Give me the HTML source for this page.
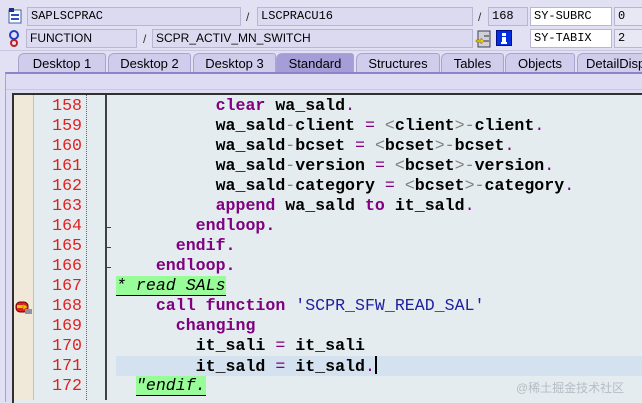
<!DOCTYPE html>
<html><head><meta charset="utf-8"><style>
*{margin:0;padding:0;box-sizing:border-box}
body{width:642px;height:400px;overflow:hidden;background:#e2e1f3;position:relative;font-family:"Liberation Sans",sans-serif}
.f{position:absolute;height:19px;background:#dcdaf0;border:1px solid #b8b6d0;font-size:12px;line-height:17px;padding-left:3px;color:#000}
.m{font-family:"Liberation Mono",monospace;font-size:12px}
.w{background:#fff}
.sl{position:absolute;font-size:12px;color:#333}
.tab{position:absolute;top:53px;height:20px;background:#d0ccec;border:1px solid #a8a4d0;border-bottom:none;font-size:13px;line-height:19px;text-align:center;border-radius:6px 3px 0 0}
.tab.a{background:#a49ed8}
#ed{position:absolute;left:12px;top:93px;width:640px;height:310px;background:#e4ecf0;border-top:2px solid #303030;border-left:2px solid #303030}
.gut{position:absolute;left:14px;top:95px;width:20px;height:305px;background:#f0e8d8;border-right:1px solid #c8c0b0}
.num{position:absolute;left:34px;top:95px;width:72px;height:305px;background:#e4ecf0}
.dot{position:absolute;left:86px;top:95px;height:305px;border-left:1px dotted #e03030}
.vl{position:absolute;left:105px;top:95px;height:305px;border-left:2px solid #404040}
.ln{position:absolute;left:34px;width:48px;text-align:right;color:#e02020;font-family:"Liberation Mono",monospace;font-size:16.6px;line-height:20px}
.c{position:absolute;left:116px;font-family:"Liberation Mono",monospace;font-size:16.6px;line-height:20px;font-weight:bold;white-space:pre;color:#000}
.k{color:#800080}.o{color:#808080;font-weight:normal}.e{color:#800080;font-weight:normal}.s{color:#2020a0;font-weight:normal}
.cm{background:#98fc98;font-style:italic;font-weight:normal;border-bottom:1px solid #000}
.dash{position:absolute;left:106px;width:5px;border-top:1px solid #404040}
</style></head><body>
<svg style="position:absolute;left:8px;top:8px" width="14" height="16"><rect x="1" y="2" width="12" height="13" fill="#fff" stroke="#4060a0"/><rect x="1" y="0" width="5" height="4" fill="#203080"/><line x1="3" y1="7" x2="11" y2="7" stroke="#3050c0" stroke-width="2"/><line x1="3" y1="11" x2="11" y2="11" stroke="#3050c0" stroke-width="2"/></svg>
<div class="f m" style="left:27px;top:7px;width:214px">SAPLSCPRAC</div>
<div class="sl" style="left:246px;top:10px">/</div>
<div class="f m" style="left:257px;top:7px;width:216px">LSCPRACU16</div>
<div class="sl" style="left:478px;top:10px">/</div>
<div class="f m" style="left:488px;top:7px;width:40px">168</div>
<div class="f m w" style="left:530px;top:7px;width:82px">SY-SUBRC</div>
<div class="f m" style="left:614px;top:7px;width:30px;background:#e8e8f4">0</div>
<svg style="position:absolute;left:8px;top:30px" width="12" height="18"><circle cx="6" cy="5" r="4" fill="none" stroke="#2040c0" stroke-width="2"/><circle cx="6" cy="13" r="3" fill="none" stroke="#c02020" stroke-width="2"/></svg>
<div class="f" style="left:26px;top:29px;width:111px">FUNCTION</div>
<div class="sl" style="left:143px;top:32px">/</div>
<div class="f" style="left:152px;top:29px;width:321px">SCPR_ACTIV_MN_SWITCH</div>
<svg style="position:absolute;left:475px;top:30px" width="16" height="18"><rect x="3" y="1" width="12" height="16" fill="#d0d0d8" stroke="#404050"/><line x1="9" y1="6" x2="14" y2="6" stroke="#303040"/><line x1="9" y1="11" x2="14" y2="11" stroke="#303040"/><path d="M1 10h5v-2l3 3-3 3v-2H1z" fill="#f0d000" stroke="#806000" stroke-width=".5"/></svg>
<svg style="position:absolute;left:496px;top:30px" width="16" height="16"><rect x="0.5" y="0.5" width="15" height="15" fill="#0030e0" stroke="#001080"/><rect x="6" y="3" width="4" height="3" fill="#fff"/><rect x="6" y="7" width="4" height="6" fill="#fff"/><rect x="5" y="12" width="6" height="2" fill="#fff"/></svg>
<div class="f m w" style="left:530px;top:29px;width:82px">SY-TABIX</div>
<div class="f m" style="left:614px;top:29px;width:30px;background:#e8e8f4">2</div>
<div style="position:absolute;left:0;top:50px;width:642px;height:1px;background:#c8c6e0"></div>
<div class="tab" style="left:18px;width:88px">Desktop 1</div>
<div class="tab" style="left:108px;width:83px">Desktop 2</div>
<div class="tab" style="left:193px;width:83px">Desktop 3</div>
<div class="tab a" style="left:276px;width:78px">Standard</div>
<div class="tab" style="left:356px;width:84px">Structures</div>
<div class="tab" style="left:441px;width:63px">Tables</div>
<div class="tab" style="left:505px;width:70px">Objects</div>
<div class="tab" style="left:577px;width:80px;text-align:left;padding-left:8px">DetailDispl</div>
<div style="position:absolute;left:5px;top:72px;width:640px;height:330px;background:#dedcf2;border-top:2px solid #8a84c8;border-left:1px solid #a8a4d0"></div>
<div style="position:absolute;left:6px;top:89px;width:640px;height:1px;background:#c8c6e0"></div>
<div id="ed"></div>
<div class="gut"></div><div class="num"></div><div class="dot"></div><div class="vl"></div>
<div style="position:absolute;left:116px;top:356px;width:530px;height:20px;background:#d4e2f0"></div>
<svg style="position:absolute;left:15px;top:301px" width="18" height="14"><rect x="1" y="1" width="12" height="10" rx="4" fill="#e02020" stroke="#600"/><rect x="2" y="4" width="9" height="3" fill="#f0c000"/><path d="M8 3l5 3-5 3z" fill="#f0c000" stroke="#805000" stroke-width=".5"/><rect x="10" y="8" width="7" height="5" fill="#9090a0"/></svg>
<div class="ln" style="top:96px">158</div><div class="ln" style="top:116px">159</div><div class="ln" style="top:136px">160</div><div class="ln" style="top:156px">161</div><div class="ln" style="top:176px">162</div><div class="ln" style="top:196px">163</div><div class="ln" style="top:216px">164</div><div class="ln" style="top:236px">165</div><div class="ln" style="top:256px">166</div><div class="ln" style="top:276px">167</div><div class="ln" style="top:296px">168</div><div class="ln" style="top:316px">169</div><div class="ln" style="top:336px">170</div><div class="ln" style="top:356px">171</div><div class="ln" style="top:376px">172</div>
<div class="dash" style="top:227px"></div><div class="dash" style="top:247px"></div><div class="dash" style="top:267px"></div>
<div class="c" style="top:96px">          <span class="k">clear</span> wa_sald<span class="e">.</span></div>
<div class="c" style="top:116px">          wa_sald<span class="o">-</span>client <span class="e">=</span> <span class="o">&lt;</span>client<span class="o">&gt;-</span>client<span class="e">.</span></div>
<div class="c" style="top:136px">          wa_sald<span class="o">-</span>bcset <span class="e">=</span> <span class="o">&lt;</span>bcset<span class="o">&gt;-</span>bcset<span class="e">.</span></div>
<div class="c" style="top:156px">          wa_sald<span class="o">-</span>version <span class="e">=</span> <span class="o">&lt;</span>bcset<span class="o">&gt;-</span>version<span class="e">.</span></div>
<div class="c" style="top:176px">          wa_sald<span class="o">-</span>category <span class="e">=</span> <span class="o">&lt;</span>bcset<span class="o">&gt;-</span>category<span class="e">.</span></div>
<div class="c" style="top:196px">          <span class="k">append</span> wa_sald <span class="k">to</span> it_sald<span class="e">.</span></div>
<div class="c" style="top:216px">        <span class="k">endloop.</span></div>
<div class="c" style="top:236px">      <span class="k">endif.</span></div>
<div class="c" style="top:256px">    <span class="k">endloop.</span></div>
<div class="c" style="top:276px"><span class="cm">* read SALs</span></div>
<div class="c" style="top:296px">    <span class="k">call function</span> <span class="s">'SCPR_SFW_READ_SAL'</span></div>
<div class="c" style="top:316px">      <span class="k">changing</span></div>
<div class="c" style="top:336px">        it_sali <span class="e">=</span> it_sali</div>
<div class="c" style="top:356px">        it_sald <span class="e">=</span> it_sald<span class="e">.</span><span style="display:inline-block;width:2px;height:18px;background:#000;vertical-align:-3px"></span></div>
<div class="c" style="top:376px">  <span class="cm">"endif.</span></div>
<div style="position:absolute;left:516px;top:379px;font-size:12px;color:#b8bcc4;font-family:'Liberation Sans','Noto Sans CJK SC',sans-serif">@稀土掘金技术社区</div>
</body></html>
